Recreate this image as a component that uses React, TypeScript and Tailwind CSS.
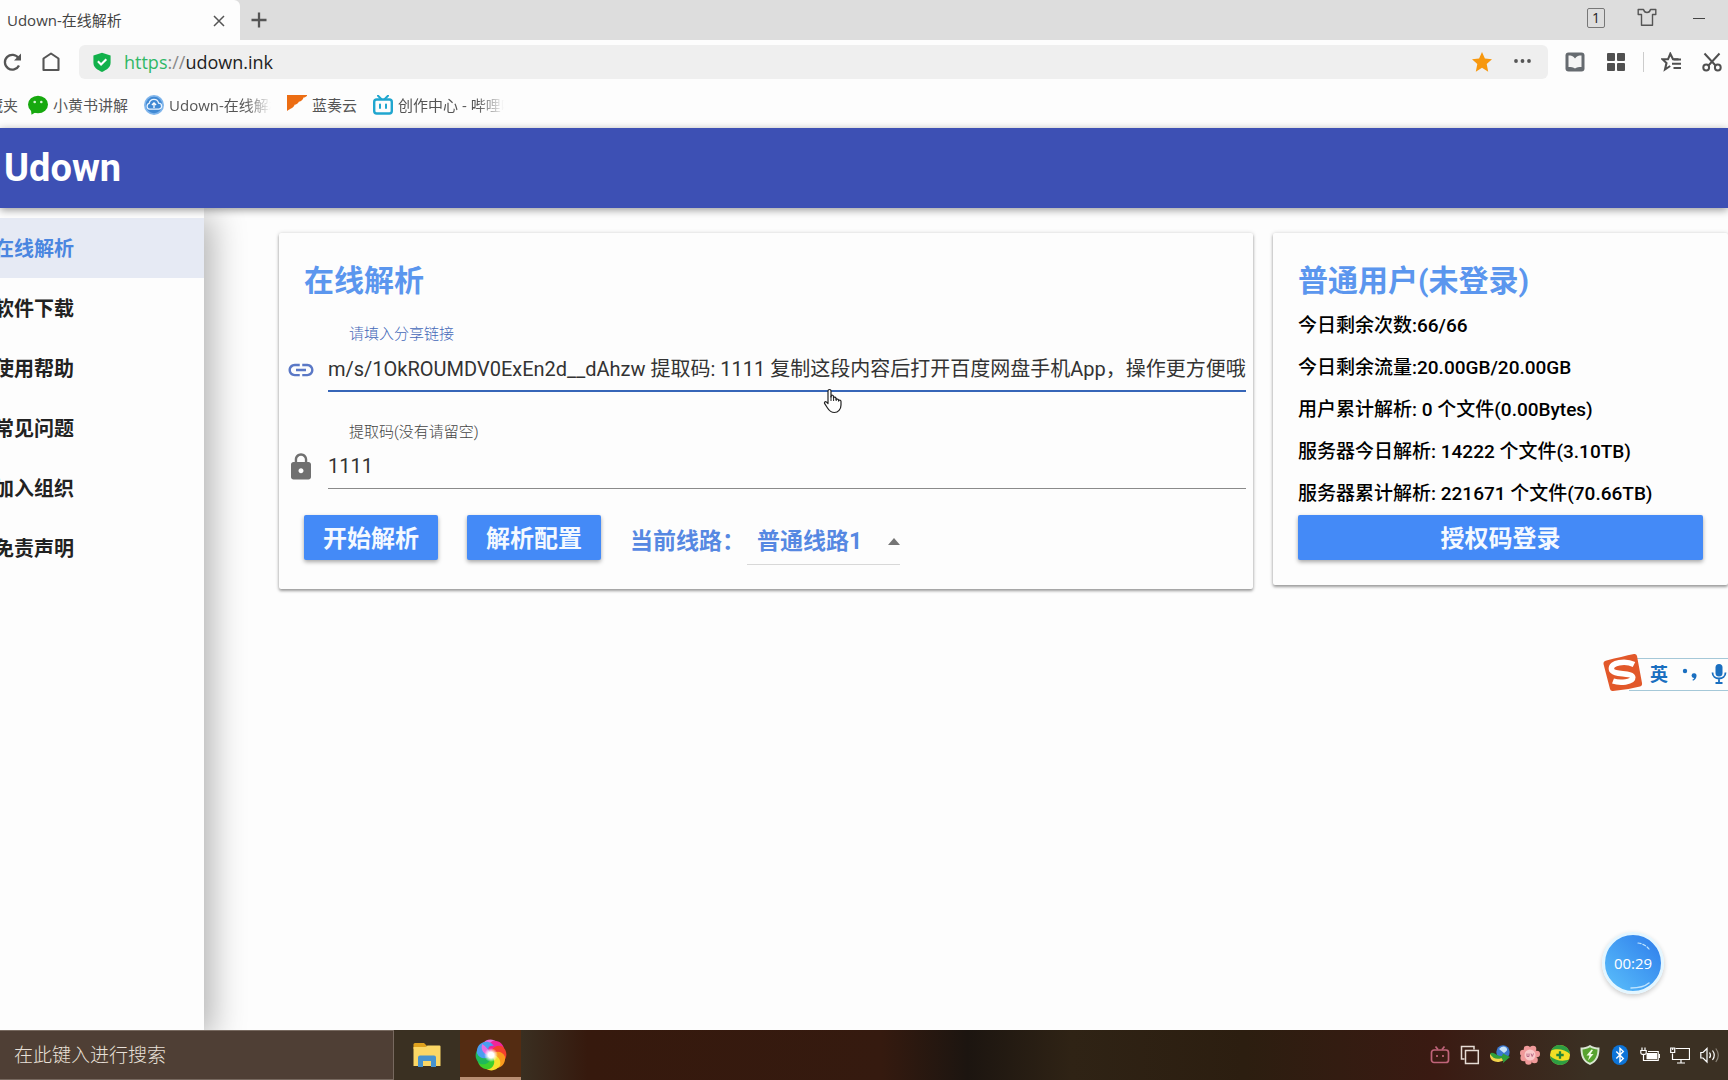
import { MdLink, MdLock } from "react-icons/md";
import type { ReactNode } from "react";

const NAV = ["在线解析", "软件下载", "使用帮助", "常见问题", "加入组织", "免责声明"];

const STATS = [
  "今日剩余次数:66/66",
  "今日剩余流量:20.00GB/20.00GB",
  "用户累计解析: 0 个文件(0.00Bytes)",
  "服务器今日解析: 14222 个文件(3.10TB)",
  "服务器累计解析: 221671 个文件(70.66TB)",
];

const SHARE_TEXT =
  "m/s/1OkROUMDV0ExEn2d__dAhzw 提取码: 1111 复制这段内容后打开百度网盘手机App，操作更方便哦";

const UI_FONT = "font-['Open_Sans','Noto_Sans_CJK_SC',sans-serif]";

function IconButton({ label, children }: { label: string; children: ReactNode }) {
  return (
    <button type="button" aria-label={label} className="flex size-5 shrink-0 items-center justify-center">
      {children}
    </button>
  );
}

function ShirtIcon() {
  return (
    <svg viewBox="0 0 20 20" className="size-5" fill="none" stroke="#555" strokeWidth="1.4" strokeLinejoin="round">
      <path d="M6.500 1.500H1.200v5h3.300v10.800h11V6.500h3.300v-5H13.500C13 3.500 11.800 4.500 10 4.500S7 3.500 6.500 1.500Z" />
    </svg>
  );
}

function TabStrip() {
  return (
    <div className="flex h-10 items-center bg-[#dddddd]">
      <div className="flex h-full w-[240px] items-center justify-between rounded-tr-md bg-[#fdfdfd] pr-[11px] pl-[7px]">
        <span className="text-[15px] text-[#444]">Udown-在线解析</span>
        <IconButton label="关闭标签页">
          <svg viewBox="0 0 20 20" className="size-5" stroke="#555" strokeWidth="1.5">
            <path d="M5 6 15 16M15 6 5 16" />
          </svg>
        </IconButton>
      </div>
      <div className="pl-[9px]">
        <IconButton label="新标签页">
          <svg viewBox="0 0 20 20" className="size-5" stroke="#555" strokeWidth="2.300">
            <path d="M10 2.500v15M2.500 10h15" />
          </svg>
        </IconButton>
      </div>
      <div className="ml-auto flex items-center gap-8 pr-[19px] pb-1">
        <button type="button" className="flex h-5 w-[18px] items-center justify-center rounded-xs border border-[#777] text-sm text-[#222]">
          1
        </button>
        <IconButton label="皮肤">
          <ShirtIcon />
        </IconButton>
        <IconButton label="最小化">
          <span className="h-px w-3 bg-[#444]" />
        </IconButton>
      </div>
    </div>
  );
}

function AddressBar() {
  return (
    <div className="flex h-11 items-center gap-[17px] pr-[6px] pl-[2px]">
      <IconButton label="刷新">
        <svg viewBox="0 0 20 20" className="size-5" fill="none" stroke="#555" strokeWidth="2.300">
          <path d="M17 13.500A7.400 7.400 0 1 1 16.500 6.200" />
          <path d="M19 1.500v7h-7Z" fill="#555" stroke="none" />
        </svg>
      </IconButton>
      <div className="flex items-center gap-[18px] pl-[2px] min-w-0 flex-1">
        <IconButton label="主页">
          <svg viewBox="0 0 20 20" className="size-5" fill="none" stroke="#555" strokeWidth="2.100" strokeLinejoin="round">
            <path d="M2.500 6.500 10 1.500l7.500 5V18h-15Z" />
          </svg>
        </IconButton>
        <div className="flex h-[34px] min-w-0 flex-1 items-center rounded-md bg-[#efefef] pr-4 pl-[13px]">
          <svg viewBox="0 0 20 22" className="h-[21px] w-5 shrink-0">
            <path d="M10 .8 19 3.600v8c0 4.500-4.500 7.400-9 9.400-4.500-2-9-4.900-9-9.400v-8Z" fill="#12b14b" />
            <path d="m5.700 9.800 3.300 3.300 5.500-5.500" fill="none" stroke="#fff" strokeWidth="2.200" />
          </svg>
          <span className="pl-3 text-lg text-[#222]">
            <span className="text-[#2fb866]">https</span>
            <span className="text-[#888]">://</span>udown.ink
          </span>
          <div className="ml-auto flex items-center gap-5">
            <IconButton label="收藏">
              <svg viewBox="0 0 20 20" className="size-5" fill="#f7980f">
                <path d="m10 0 2.900 6.500 7.100.7-5.300 4.700 1.500 7.800L10 15.700 3.800 19.700l1.500-7.800L0 7.200l7.100-.7Z" />
              </svg>
            </IconButton>
            <IconButton label="更多">
              <svg viewBox="0 0 20 20" className="size-5" fill="#555">
                <circle cx="4" cy="9" r="1.900" />
                <circle cx="10.500" cy="9" r="1.900" />
                <circle cx="17" cy="9" r="1.900" />
              </svg>
            </IconButton>
          </div>
        </div>
      </div>
      <div className="flex items-center gap-[21px]">
        <IconButton label="阅读">
          <svg viewBox="0 0 20 20" className="size-5">
            <rect x=".5" y=".5" width="19" height="19" rx="3" fill="#666b70" />
            <path d="M3.500 3.500C6 3.500 8.500 4 10 6.500c1.500-2.500 4-3 6.500-3v11.500C14 15 11.500 15 10 16.500 8.500 15 6 15 3.500 15Z" fill="#f4f4f4" />
          </svg>
        </IconButton>
        <IconButton label="扩展">
          <svg viewBox="0 0 20 20" className="size-5" fill="#505050">
            <rect x="1" y="1" width="8" height="8" rx="1" />
            <rect x="11" y="1" width="8" height="8" rx="1" />
            <rect x="1" y="11" width="8" height="8" rx="1" />
            <rect x="11" y="11" width="8" height="8" rx="1" />
          </svg>
        </IconButton>
        <span className="-mx-1 h-5 w-px bg-[#ccc]" />
        <IconButton label="收藏夹">
          <svg viewBox="0 0 20 20" className="size-5" fill="none" stroke="#505050" strokeWidth="2.100">
            <path d="M17.500 7.300H12L9.300 1.800 7 7.300H1.500l4 3.700-1.500 6.500 5.200-3.500" />
            <path d="M12.500 7.500H20M11 11.800H20M12.500 16H20" />
          </svg>
        </IconButton>
        <IconButton label="截图">
          <svg viewBox="0 0 20 20" className="size-5" fill="none" stroke="#505050" strokeWidth="2">
            <path d="M2.500 1.500 14 14M17.500 1.500 6 14" />
            <circle cx="4.200" cy="15.500" r="2.900" />
            <circle cx="15.800" cy="15.500" r="2.900" />
          </svg>
        </IconButton>
      </div>
    </div>
  );
}

const FADE = "[mask-image:linear-gradient(to_right,black_75%,transparent)]";

function Bookmarks() {
  return (
    <nav aria-label="书签" className="flex h-11 items-center gap-4 overflow-hidden pb-[2px] text-[15px] whitespace-nowrap text-[#555]">
      <div className="flex items-center gap-[10px]">
        <a href="#" className="-ml-[12px]">藏夹</a>
        <a href="#" className="flex items-center gap-[5px]">
          <svg viewBox="0 0 20 20" className="size-5">
            <ellipse cx="10" cy="9.500" rx="10" ry="8.800" fill="#17a90f" />
            <path d="m3 15 .5 4.800L8 17Z" fill="#17a90f" />
            <circle cx="6.700" cy="7" r="1.300" fill="#d8f5d5" />
            <circle cx="13.300" cy="7" r="1.300" fill="#d8f5d5" />
          </svg>
          小黄书讲解
        </a>
      </div>
      <a href="#" className="flex items-center gap-[5px]">
        <svg viewBox="0 0 20 20" className="size-5">
          <circle cx="10" cy="10" r="10" fill="#7fb5ec" />
          <circle cx="10" cy="10" r="8.200" fill="#4089d4" />
          <path d="M5.500 14.200a3 3 0 0 1-.3-5.800 4.800 4.800 0 0 1 9.400-.2 3 3 0 0 1 0 6Z" fill="none" stroke="#e8f3ff" strokeWidth="1.300" />
          <path d="M10 13V8.200M7.900 10 10 7.900l2.100 2.100" fill="none" stroke="#fff" strokeWidth="1.300" />
        </svg>
        <span className={`w-[102px] overflow-hidden ${FADE}`}>Udown-在线解析</span>
      </a>
      <a href="#" className="flex items-center gap-[5px]">
        <svg viewBox="0 0 20 20" className="size-5">
          <path d="M0 0h20.500c-1 1.800-2.500 2.500-4 2.600-.4 2.200-2.200 4-4.700 4.200C11 8.500 9.500 9.600 7.500 9.800 7 12.500 4 13.500 0 16Z" fill="#ec6d13" />
        </svg>
        蓝奏云
      </a>
      <a href="#" className="flex items-center gap-[5px]">
        <svg viewBox="0 0 20 20" className="size-5" fill="none" stroke="#20a6cf" strokeWidth="2">
          <rect x="1.200" y="4.500" width="17.600" height="14" rx="2.500" strokeWidth="2.400" />
          <path d="m5 .8 3 3M15 .8l-3 3M7 9.500v3.500M13 9.500v3.500" strokeLinecap="round" />
        </svg>
        <span className={`w-[106px] overflow-hidden ${FADE}`}>创作中心 - 哔哩哔哩</span>
      </a>
    </nav>
  );
}

function Sidebar() {
  return (
    <nav aria-label="主导航" className="w-[204px] shrink-0 overflow-x-clip">
      <ul className="flex flex-col pt-[10px]">
        {NAV.map((item, i) => (
          <li key={item}>
            <a
              href="#"
              className={`flex h-[60px] items-center pt-[2px] text-xl font-bold ${
                i === 0 ? "bg-[#e6eaf4] text-[#4a86e0]" : "text-[#222]"
              }`}
            >
              <span className="-ml-[6px]">{item}</span>
            </a>
          </li>
        ))}
      </ul>
    </nav>
  );
}

const CARD = "bg-[#fdfdfd] rounded-xs shadow-[0_2px_3px_rgba(0,0,0,0.35),0_0_4px_rgba(0,0,0,0.15)]";
const TITLE = "h-12 text-3xl leading-12 font-bold text-[#5b96ee]";
const BUTTON =
  "h-[45px] rounded-xs bg-[#448af7] pt-[2px] text-center text-2xl leading-none font-bold text-[#f4f9ff] shadow-[0_2px_4px_rgba(0,0,0,0.35)]";

function HandCursor() {
  return (
    <svg viewBox="0 0 20 26" className="absolute top-[41px] left-[537px] h-[26px] w-5" fill="#fff" stroke="#222" strokeWidth="1.200" strokeLinejoin="round">
      <path d="M6.500 1.500c.9 0 1.500.6 1.500 1.500v6l.2-1.500c.7-.6 2-.3 2.300.6v1.400c.8-.7 2.200-.4 2.500.6v1.200c.8-.6 2.300-.3 2.600.8v1l.2-.9c1-.5 2.200.2 2.200 1.400V17c0 4.500-3 7.500-6.500 7.500-4 0-5.500-2-7-4.500L1.700 15.700c-.8-1.200.3-2.600 1.600-1.800L5 15.500V3c0-.9.600-1.500 1.500-1.500Z" />
      <path d="M8 8v5M10.600 9.500V13M13.200 10.500V13" fill="none" strokeWidth="1" />
    </svg>
  );
}

function ParsePanel() {
  return (
    <section className={`${CARD} self-start pt-6 pb-6`}>
      <h2 className={`${TITLE} px-[25px]`}>在线解析</h2>

      <div className="px-[7px] pt-[19px]">
        <label htmlFor="share" className="block h-5 pl-[63px] text-[15px] leading-5 font-light text-[#4468b8]">
          请填入分享链接
        </label>
        <div className="relative mt-[3px] flex items-center gap-3">
          <MdLink className="size-[30px] shrink-0 text-[#5a78c6]" />
          <input
            id="share"
            type="text"
            defaultValue={SHARE_TEXT}
            className="h-[45px] min-w-0 flex-1 border-b-2 border-[#3766b8] pb-[2px] text-xl text-[#333] outline-none"
          />
          <HandCursor />
        </div>
      </div>

      <div className="px-[7px] pt-[30px]">
        <label htmlFor="code" className="block h-5 pl-[63px] text-[15px] leading-5 font-light text-[#444]">
          提取码(没有请留空)
        </label>
        <div className="mt-[3px] flex items-center gap-3">
          <MdLock className="size-[30px] shrink-0 text-[#707070]" />
          <input
            id="code"
            type="text"
            defaultValue="1111"
            className="h-11 min-w-0 flex-1 border-b border-[#8a8a8a] pb-[2px] text-xl text-[#333] outline-none"
          />
        </div>
      </div>

      <div className="flex items-start px-[25px] pt-[26px]">
        <button type="button" className={`${BUTTON} px-[19px]`}>开始解析</button>
        <button type="button" className={`${BUTTON} ml-[29px] px-[19px]`}>解析配置</button>
        <label htmlFor="route" className="ml-[29px] pt-[5px] text-[23px] leading-[44px] font-bold whitespace-nowrap text-[#5688e2]">
          当前线路：
        </label>
        <div className="relative ml-[2px] pt-[5px]">
          <select
            id="route"
            className="h-[45px] w-[153px] appearance-none border-b border-[#d8d8d8] pl-[10px] text-[23px] font-bold text-[#5688e2] outline-none"
          >
            <option>普通线路1</option>
          </select>
          <svg viewBox="0 0 12 7" className="pointer-events-none absolute top-[23px] right-0 h-[7px] w-3" fill="#757575">
            <path d="M6 0 12 7H0Z" />
          </svg>
        </div>
      </div>
    </section>
  );
}

function AccountPanel() {
  return (
    <section className={`${CARD} self-start px-[25px] pt-6 pb-[25px]`}>
      <h2 className={TITLE}>普通用户(未登录)</h2>
      <ul className="text-[19px] leading-[42px] font-medium whitespace-nowrap text-black">
        {STATS.map((line) => (
          <li key={line}>{line}</li>
        ))}
      </ul>
      <button type="button" className={`${BUTTON} w-full`}>授权码登录</button>
    </section>
  );
}

function ImeBar() {
  return (
    <div className={`absolute top-[652px] right-0 flex items-center text-[#1a6fc0] ${UI_FONT}`}>
      <svg viewBox="0 0 44 44" className="relative z-10 -mr-[15px] size-11">
        <path d="M6.500 8.500Q22 4.500 34 2q2.500-.3 3 2l5 27q.5 2.500-2 3.500Q27 38 13 39q-2.500.3-3-2L3.500 12q-.4-2.800 3-3.500Z" fill="#e2582a" />
        <path d="M34 12.500C26 8.500 10 10 11.500 17.500c1.200 6 21 2.500 21.300 8 .2 4.800-13 6-19.800 3.500" fill="none" stroke="#fff" strokeWidth="5.500" />
      </svg>
      <div className="flex h-[33px] items-center border-y border-[#a5c8d8] bg-[#fdfdfd] pr-[1px] pl-[21px]">
        <span className="text-[18px] font-bold">英</span>
        <svg viewBox="0 0 16 16" className="ml-[14px] size-4" fill="#1a6fc0">
          <circle cx="3" cy="5" r="2.200" />
          <path d="M9.500 9.500a2.500 2.500 0 1 1 5 .7c-.3 2-1.500 3.600-3.500 4.500l-.6-1c1-.5 1.600-1 1.800-1.800A2.500 2.500 0 0 1 9.500 9.500Z" />
        </svg>
        <svg viewBox="0 0 16 20" className="ml-[13px] h-5 w-4" fill="#1a6fc0">
          <rect x="4.500" y="0" width="7" height="12.500" rx="3.500" />
          <path d="M1.500 8.500c0 8 13 8 13 0M8 14.500V19M4.500 19h7" fill="none" stroke="#1a6fc0" strokeWidth="1.800" />
        </svg>
      </div>
    </div>
  );
}

function RecordTimer() {
  return (
    <div className={`absolute top-[932px] right-[64px] flex size-[62px] items-center justify-center rounded-full border-[3px] border-[#e4f6ff] bg-linear-to-bl from-[#2f7bea] to-[#5cc0fb] text-[15px] text-white shadow-[0_2px_5px_rgba(0,0,0,0.2)] ${UI_FONT}`}>
      <svg viewBox="0 0 56 56" className="absolute inset-0 size-14" fill="none" stroke="#bfe4ff" strokeLinecap="round">
        <path d="M33 8q7 1 11 6" strokeWidth="1.200" strokeDasharray="3 2" />
        <path d="M26 53q12 0 18-5" strokeWidth="1.500" />
      </svg>
      00:29
    </div>
  );
}

function Tray() {
  return (
    <div className="ml-auto flex items-center gap-[10px] pr-2">
      <svg viewBox="0 0 20 20" className="size-5" fill="none" stroke="#c0647a" strokeWidth="1.700">
        <rect x="1.500" y="5" width="17" height="12.500" rx="2.500" />
        <path d="m5.500 1.500 2.500 3M14.500 1.500l-2.500 3M7 10v2M13 10v2" />
      </svg>
      <svg viewBox="0 0 20 20" className="size-5" fill="none" stroke="#e6dcd4" strokeWidth="1.500">
        <path d="M4.500 14H1.500V1.500H14v3" />
        <rect x="5.500" y="5.500" width="12.800" height="13" />
      </svg>
      <svg viewBox="0 0 20 20" className="size-5">
        <circle cx="13" cy="7" r="6.700" fill="#3c78d0" />
        <path d="M9 4q4-4 7-1.500T14 8Z" fill="#c8e2f8" />
        <path d="M0 9C3 5 7 12 12 11l1-2.500L20 12l-7 6 .3-2.500C7 17 2 15 0 9Z" fill="#2f9e3c" />
        <path d="M0 9C-1 16 7 19 13 15.500L11.500 13C7 15 3 13.500 0 9Z" fill="#f2d24a" />
      </svg>
      <svg viewBox="0 0 20 20" className="size-5" fill="#f09a9a">
        <circle cx="7" cy="4" r="3.300" />
        <circle cx="13" cy="4" r="3.300" />
        <circle cx="16.700" cy="9" r="3.300" />
        <circle cx="14.500" cy="15" r="3.300" />
        <circle cx="8.500" cy="16.500" r="3.300" />
        <circle cx="3.700" cy="13" r="3.300" />
        <circle cx="3.300" cy="8" r="3.300" />
        <circle cx="10" cy="10" r="5.500" fill="#f9caca" />
        <path d="M7 8.500v3h2v-3M11 8.500l1.200 3 1.300-3" fill="none" stroke="#b86a86" strokeWidth="1" />
      </svg>
      <svg viewBox="0 0 20 20" className="size-5">
        <circle cx="10" cy="10" r="10" fill="#f3df25" />
        <path d="M1 5.700A10 10 0 0 1 19.900 9C15 4 6 3 1 5.700ZM19 14.300A10 10 0 0 1 .1 11c5 5 14 6 18.900 3.300Z" fill="#2e9e43" />
        <path d="M10 6.300v7.400M6.300 10h7.400" stroke="#23853a" strokeWidth="2.300" />
      </svg>
      <svg viewBox="0 0 20 20" className="size-5">
        <path d="M10 0c3 2 6 2.500 9.500 2.500 0 8-1.500 14-9.500 17.500C2 16.500.5 10.500.5 2.500 4 2.500 7 2 10 0Z" fill="#d9e6d2" />
        <path d="M10 2.300c2.500 1.400 5 2 7.500 2.100-.2 6-1.500 10.500-7.500 13.300-6-2.800-7.300-7.300-7.500-13.300C5 4.300 7.500 3.700 10 2.300Z" fill="#57a32f" />
        <path d="m11.500 4.500-5 6h3l-1.500 5 5.500-6.500h-3l2.500-4Z" fill="#f0fbe4" />
      </svg>
      <svg viewBox="0 0 20 20" className="size-5">
        <rect x="2" y="0" width="16" height="20" rx="8" fill="#0d74d8" />
        <path d="m6.300 6.500 7 7L10 16.700V3.300l3.300 3.200-7 7" fill="none" stroke="#fff" strokeWidth="1.400" />
      </svg>
      <svg viewBox="0 0 20 20" className="size-5" fill="none" stroke="#fff" strokeWidth="1.200">
        <path d="M2 2.500v3M5 2.500v3M.8 5.500h5.400v2.300a1.500 1.500 0 0 1-1.500 1.500H2.300A1.500 1.500 0 0 1 .8 7.800ZM3.500 9.300v6.200h14.700v-9H8" />
        <rect x="6.500" y="8" width="10.500" height="6.300" fill="#fff" stroke="none" />
        <path d="M19.500 9v4" />
      </svg>
      <svg viewBox="0 0 20 20" className="size-5" fill="none" stroke="#fff" strokeWidth="1.200">
        <path d="M5.500 3.500h14V14.500h-17V8.500M11 14.500V18M7 18h8" />
        <path d="M.7 3h4v4.500h-4ZM2.700 3v2" />
      </svg>
      <svg viewBox="0 0 20 20" className="size-5" fill="none" stroke="#fff" strokeWidth="1.200">
        <path d="M.8 7.500v5.500H3L7 17V3.500L3 7.500Z" />
        <path d="M9.500 7.500q2 2.700 0 5.500M12.500 5.500q3.600 4.700 0 9.500" />
        <path d="M15.800 3.500q5 6.700 0 13.500" stroke="#8a8378" />
      </svg>
    </div>
  );
}

const SWIRL = ["#e86be0", "#f0259a", "#f5402e", "#fb9a1e", "#f8e02d", "#3fd02c", "#1fb85a", "#4a9df0"];

function SwirlIcon() {
  return (
    <svg viewBox="-16 -16 32 32" className="size-8">
      <defs>
        <radialGradient id="swirl-core">
          <stop offset="0.4" stopColor="#fff" />
          <stop offset="1" stopColor="#fff" stopOpacity="0" />
        </radialGradient>
      </defs>
      {SWIRL.map((color, i) => (
        <path
          key={color}
          transform={`rotate(${i * 45 - 30})`}
          d="M0 0C-6-3-7-10-2-14 4-16.500 10-13.500 11.500-8 12.500-4 11-1.500 9.500.5 9-5 5-6.500 0 0Z"
          fill={color}
        />
      ))}
      <path
        transform={`rotate(${-30})`}
        d="M0 0C-6-3-7-10-2-14Q1-8 0 0Z"
        fill={SWIRL[0]}
      />
      <circle r="7" fill="url(#swirl-core)" />
    </svg>
  );
}

function Taskbar() {
  return (
    <footer
      className={`flex h-[50px] shrink-0 items-stretch bg-[linear-gradient(to_right,#3a3022_30%,#36190d_34%,#351a0f_51%,#1c1510_56%,#2f2315_62%,#2c1e10_72%,#3a1a12_83%,#3b3023_92%)] ${UI_FONT}`}
    >
      <input
        type="text"
        aria-label="搜索"
        placeholder="在此键入进行搜索"
        className="w-[394px] border border-l-0 border-[#77695f] bg-[#4f3f35] pl-[14px] text-[19px] font-light text-[#e8e0d8] outline-none placeholder:text-[#e8e0d8]"
      />
      <button type="button" aria-label="文件资源管理器" className="flex w-[66px] items-center justify-center">
        <svg viewBox="0 0 28 24" className="h-6 w-7">
          <path d="M.5 1.500Q.5 0 2 0h9l2.500 2.500V6H.5Z" fill="#dfa11e" />
          <path d="M.5 4h12l2-1.500h12q1 0 1 1V23H.5Z" fill="#fbd766" />
          <path d="M5 24V14.500q0-2 2-2h14q2 0 2 2V24h-5v-6h-8v6Z" fill="#4793cf" />
        </svg>
      </button>
      <button type="button" aria-label="浏览器" className="flex w-[61px] items-center justify-center border-b-[3px] border-[#b98e72] bg-[#542c12] pt-[3px]">
        <SwirlIcon />
      </button>
      <Tray />
    </footer>
  );
}

export default function App() {
  return (
    <div className="relative flex min-h-screen flex-col overflow-hidden bg-[#fdfdfd] font-[Roboto,'Noto_Sans_CJK_SC',sans-serif]">
      <header className={UI_FONT}>
        <TabStrip />
        <AddressBar />
        <Bookmarks />
      </header>
      <div className="relative z-10 flex h-20 items-center bg-[#3d50b4] pl-1 shadow-[0_2px_8px_rgba(0,0,0,0.4)]">
        <h1 className="text-[38px] font-bold text-white">Udown</h1>
      </div>
      <div className="flex flex-1">
        <div className="flex shadow-[8px_8px_32px_rgba(0,0,0,0.3)]">
          <Sidebar />
        </div>
        <main className="grid flex-1 grid-cols-[974fr_455fr] gap-5 pt-[25px] pl-[75px]">
          <ParsePanel />
          <AccountPanel />
        </main>
      </div>
      <ImeBar />
      <RecordTimer />
      <Taskbar />
    </div>
  );
}
